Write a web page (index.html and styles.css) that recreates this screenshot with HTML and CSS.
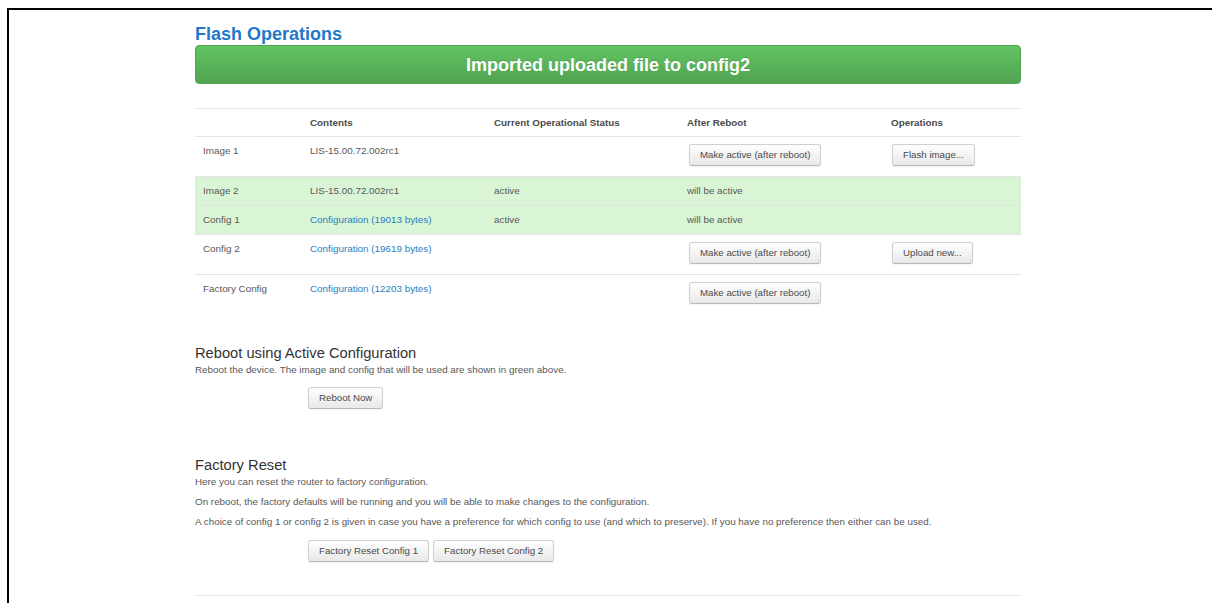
FILE: index.html
```html
<!DOCTYPE html>
<html lang="en">
<head>
<meta charset="utf-8">
<title>Flash Operations</title>
<link rel="stylesheet" href="styles.css">
</head>
<body>
<div class="frame">
  <main class="page">
    <h1 class="title">Flash Operations</h1>
    <div class="alert-success">Imported uploaded file to config2</div>

    <table class="flash-table">
      <colgroup>
        <col class="c-name"><col class="c-contents"><col class="c-status"><col class="c-after"><col class="c-ops">
      </colgroup>
      <thead>
        <tr>
          <th></th>
          <th>Contents</th>
          <th>Current Operational Status</th>
          <th>After Reboot</th>
          <th>Operations</th>
        </tr>
      </thead>
      <tbody>
        <tr>
          <td>Image 1</td>
          <td>LIS-15.00.72.002rc1</td>
          <td></td>
          <td><button class="btn">Make active (after reboot)</button></td>
          <td><button class="btn">Flash image...</button></td>
        </tr>
        <tr class="active-row">
          <td>Image 2</td>
          <td>LIS-15.00.72.002rc1</td>
          <td>active</td>
          <td>will be active</td>
          <td></td>
        </tr>
        <tr class="active-row">
          <td>Config 1</td>
          <td><a href="#">Configuration (19013 bytes)</a></td>
          <td>active</td>
          <td>will be active</td>
          <td></td>
        </tr>
        <tr>
          <td>Config 2</td>
          <td><a href="#">Configuration (19619 bytes)</a></td>
          <td></td>
          <td><button class="btn">Make active (after reboot)</button></td>
          <td><button class="btn">Upload new...</button></td>
        </tr>
        <tr>
          <td>Factory Config</td>
          <td><a href="#">Configuration (12203 bytes)</a></td>
          <td></td>
          <td><button class="btn">Make active (after reboot)</button></td>
          <td></td>
        </tr>
      </tbody>
    </table>

    <section class="section reboot">
      <h2>Reboot using Active Configuration</h2>
      <p>Reboot the device. The image and config that will be used are shown in green above.</p>
      <div class="actions">
        <button class="btn">Reboot Now</button>
      </div>
    </section>

    <section class="section factory">
      <h2>Factory Reset</h2>
      <p>Here you can reset the router to factory configuration.</p>
      <p>On reboot, the factory defaults will be running and you will be able to make changes to the configuration.</p>
      <p>A choice of config 1 or config 2 is given in case you have a preference for which config to use (and which to preserve). If you have no preference then either can be used.</p>
      <div class="actions">
        <button class="btn">Factory Reset Config 1</button>
        <button class="btn">Factory Reset Config 2</button>
      </div>
    </section>

    <hr class="rule">
  </main>
</div>
</body>
</html>
```

FILE: styles.css
```css
html, body {
  margin: 0;
  padding: 0;
  background: #fff;
  overflow: hidden;
}

body {
  font-family: "Liberation Sans", Arial, sans-serif;
  font-size: 9.85px;
  line-height: 16px;
  color: #585858;
}

/* outer window edge */
.frame {
  margin: 8px 0 0 7px;
  height: calc(100vh - 8px);
  box-sizing: border-box;
  border-top: 2px solid #000;
  border-left: 2px solid #000;
  overflow: hidden;
}

.page {
  width: 826px;
  margin-left: 186px;
}

.title {
  margin: 14px 0 0;
  font-size: 18px;
  line-height: 20px;
  font-weight: bold;
  color: #1f78c8;
}

.alert-success {
  margin-top: 1px;
  height: 39px;
  line-height: 39px;
  border-radius: 4px;
  background: linear-gradient(#62c462, #51a351);
  border: 1px solid #4fa34f;
  box-sizing: border-box;
  color: #fff;
  font-size: 18px;
  font-weight: bold;
  text-align: center;
  text-shadow: 0 -1px 0 rgba(0, 0, 0, 0.15);
}

/* flash table */
.flash-table {
  margin-top: 24px;
  width: 826px;
  border-collapse: collapse;
  table-layout: fixed;
}

.c-name { width: 107px; }
.c-contents { width: 184px; }
.c-status { width: 193px; }
.c-after { width: 204px; }
.c-ops { width: 138px; }

.flash-table th,
.flash-table td {
  text-align: left;
  vertical-align: top;
  border-top: 1px solid #e3e3e3;
  padding: 6px 8px;
  line-height: 16px;
}

.flash-table th {
  padding: 6px 8px 5px;
  color: #4a4a4a;
  font-weight: bold;
}

.flash-table .active-row td {
  background: #d9f5d6;
}

.flash-table td .btn {
  vertical-align: top;
  margin: 1px 0 4px 2px;
}

.flash-table td:last-child .btn {
  margin-left: 1px;
}

a {
  color: #2a7cc0;
  text-decoration: none;
}

/* buttons */
.btn {
  display: inline-block;
  height: 22px;
  padding: 0 10px;
  box-sizing: border-box;
  font-family: "Liberation Sans", Arial, sans-serif;
  font-size: 9.7px;
  line-height: 20px;
  color: #4a4a4a;
  background: linear-gradient(#ffffff, #e8e8e8);
  border: 1px solid #cfcfcf;
  border-bottom-color: #b8b8b8;
  border-radius: 3px;
  box-shadow: 0 1px 2px rgba(0, 0, 0, 0.06);
  cursor: pointer;
}

/* lower sections */
.section h2 {
  margin: 0;
  font-size: 14.7px;
  line-height: 18px;
  font-weight: normal;
  color: #333;
}

.section p {
  margin: 0 0 4px;
}

.section .actions {
  padding-left: 113px;
  display: flex;
  gap: 4px;
}

.reboot {
  margin-top: 30px;
}

.reboot p {
  margin-bottom: 0;
}

.reboot .actions {
  margin-top: 9px;
}

.factory {
  margin-top: 47px;
}

.factory .actions {
  margin-top: 10px;
}

.rule {
  margin: 33px 0 0;
  border: 0;
  border-top: 1px solid #ececec;
}
```
